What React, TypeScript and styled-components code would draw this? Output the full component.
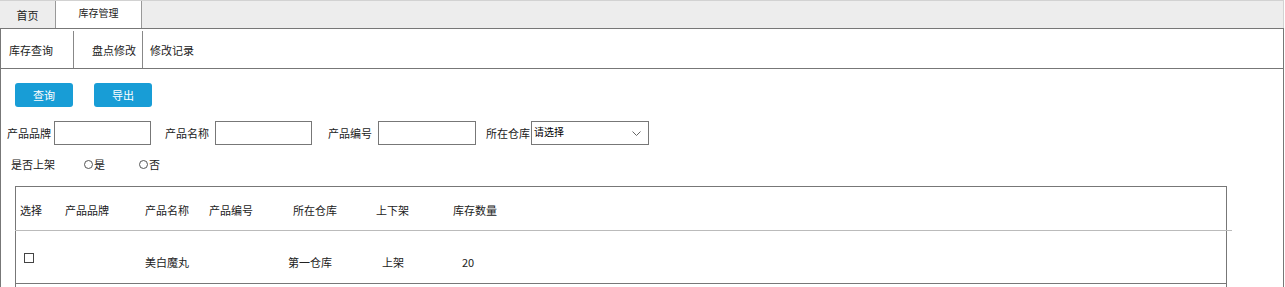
import React from 'react';
import styled, { createGlobalStyle } from 'styled-components';

const GlobalStyle = createGlobalStyle`
    body {
        margin: 0;
        font-family: "Noto Sans CJK SC", "Liberation Sans", sans-serif;
        font-size: 11px;
        color: #222;
        background: #fff;
    }
    * {
        box-sizing: border-box;
    }
`

const Page = styled.div`
    width: 1285px;
    height: 287px;
    overflow: hidden;
`

const TabBar = styled.div`
    display: flex;
    height: 28px;
    width: 1284px;
    background: #ededed;
    border-top: 1px solid #d2d2d2;
    border-right: 1px solid #d2d2d2;
`

const Tab = styled.div<{ active?: boolean }>`
    display: flex;
    align-items: center;
    justify-content: center;
    width: ${props => props.active ? '86px' : '56px'};
    height: 27px;
    background: ${props => props.active ? '#fff' : '#ededed'};
    border-right: 1px solid #999;
    font-size: ${props => props.active ? '10px' : '11px'};
    padding-bottom: ${props => props.active ? '4px' : '0'};
`

const Panel = styled.div`
    width: 1284px;
    height: 300px;
    border: 1px solid #777;
`

const SubNav = styled.div`
    display: flex;
    height: 40px;
    border-bottom: 1px solid #777;
    padding-top: 2px;
`

const SubItem = styled.div<{ width: number; pad: number; last?: boolean }>`
    display: flex;
    align-items: center;
    width: ${props => props.width}px;
    padding-left: ${props => props.pad}px;
    border-right: ${props => props.last ? 'none' : '1px solid #888'};
`

const Content = styled.div`
    padding: 14px 0 0 0;
`

const ButtonRow = styled.div`
    display: flex;
    gap: 21px;
    padding-left: 14px;
`

const Button = styled.button`
    width: 58px;
    height: 24px;
    border: none;
    border-radius: 3px;
    background: #189dd6;
    color: #fff;
    font-family: inherit;
    font-size: 11px;
    padding: 0;
`

const FormRow = styled.div`
    display: flex;
    align-items: center;
    margin-top: 14px;
    padding-left: 6px;
    height: 24px;
`

const Field = styled.div<{ gap: number; ml: number }>`
    display: flex;
    align-items: center;
    margin-left: ${props => props.ml}px;
    gap: ${props => props.gap}px;
`

const TextInput = styled.input<{ w: number }>`
    width: ${props => props.w}px;
    height: 24px;
    border: 1px solid #777;
    margin: 0;
    padding: 0;
`

const Select = styled.div`
    position: relative;
    display: flex;
    align-items: center;
    width: 118px;
    height: 24px;
    border: 1px solid #777;
    padding-left: 2px;
    padding-bottom: 4px;
    font-size: 10px;
    color: #000;
`

const Chevron = styled.svg`
    position: absolute;
    right: 7px;
    top: 9px;
`

const RadioRow = styled.div`
    display: flex;
    align-items: center;
    height: 14px;
    margin-top: 12px;
    padding-left: 10px;
`

const RadioLabel = styled.span<{ ml: number }>`
    display: flex;
    align-items: center;
    margin-left: ${props => props.ml}px;
`

const RadioDot = styled.span`
    display: inline-block;
    width: 9px;
    height: 9px;
    border: 1px solid #555;
    border-radius: 50%;
    margin-right: 1px;
`

const Table = styled.div`
    position: relative;
    margin: 15px 0 0 14px;
    width: 1212px;
    border: 1px solid #777;
    height: 120px;
`

const HeadRow = styled.div`
    display: flex;
    align-items: center;
    height: 43px;
    padding-top: 2px;
`

const Separator = styled.div`
    width: 1217px;
    height: 1px;
    background: #bbb;
    margin-left: -1px;
`

const BodyRow = styled.div`
    display: flex;
    align-items: center;
    height: 53px;
    border-bottom: 1px solid #777;
    padding-top: 10px;
`

const Cell = styled.div<{ left: number }>`
    position: absolute;
    left: ${props => props.left}px;
    white-space: nowrap;
`

const CellRow = styled.div`
    position: relative;
    width: 100%;
    height: 14px;
    display: flex;
    align-items: center;
`

const CheckBox = styled.span`
    position: absolute;
    left: 8px;
    top: -2px;
    width: 10px;
    height: 10px;
    border: 1px solid #444;
`

const headers: [string, number][] = [
    ['选择', 4], ['产品品牌', 49], ['产品名称', 129], ['产品编号', 193],
    ['所在仓库', 277], ['上下架', 360], ['库存数量', 437],
]

const row: [string, number][] = [
    ['美白魔丸', 129], ['第一仓库', 272], ['上架', 366], ['20', 446],
]

export default function App() {
    return (
        <Page>
            <GlobalStyle />
            <TabBar>
                <Tab>首页</Tab>
                <Tab active>库存管理</Tab>
            </TabBar>
            <Panel>
                <SubNav>
                    <SubItem width={73} pad={8}>库存查询</SubItem>
                    <SubItem width={69} pad={18}>盘点修改</SubItem>
                    <SubItem width={100} pad={7} last>修改记录</SubItem>
                </SubNav>
                <Content>
                    <ButtonRow>
                        <Button>查询</Button>
                        <Button>导出</Button>
                    </ButtonRow>
                    <FormRow>
                        <Field gap={3} ml={0}>
                            产品品牌<TextInput w={97} />
                        </Field>
                        <Field gap={6} ml={14}>
                            产品名称<TextInput w={97} />
                        </Field>
                        <Field gap={6} ml={16}>
                            产品编号<TextInput w={98} />
                        </Field>
                        <Field gap={1} ml={10}>
                            所在仓库
                            <Select>
                                请选择
                                <Chevron width="9" height="5" viewBox="0 0 9 5">
                                    <path d="M0.5 0.5 L4.5 4.5 L8.5 0.5" fill="none" stroke="#666" strokeWidth="1" />
                                </Chevron>
                            </Select>
                        </Field>
                    </FormRow>
                    <RadioRow>
                        是否上架
                        <RadioLabel ml={29}><RadioDot />是</RadioLabel>
                        <RadioLabel ml={34}><RadioDot />否</RadioLabel>
                    </RadioRow>
                    <Table>
                        <HeadRow>
                            <CellRow>
                                {headers.map(([t, l]) => <Cell key={t} left={l}>{t}</Cell>)}
                            </CellRow>
                        </HeadRow>
                        <Separator />
                        <BodyRow>
                            <CellRow>
                                <CheckBox />
                                {row.map(([t, l]) => <Cell key={t} left={l}>{t}</Cell>)}
                            </CellRow>
                        </BodyRow>
                    </Table>
                </Content>
            </Panel>
        </Page>
    )
}
